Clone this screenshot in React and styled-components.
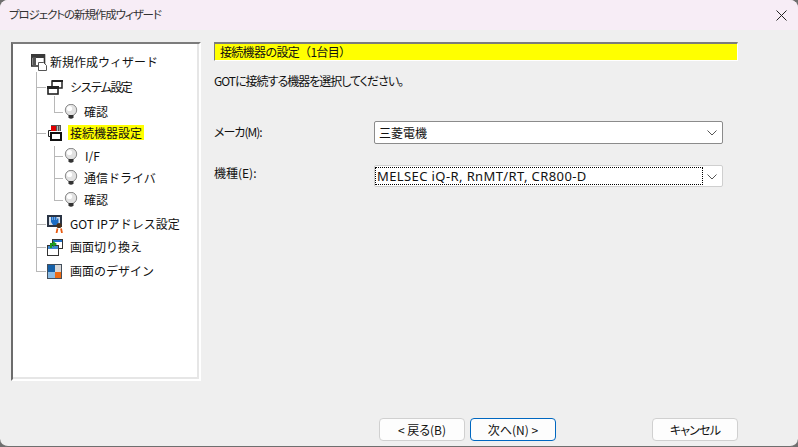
import styled, { createGlobalStyle } from "styled-components";

const GlobalStyle = createGlobalStyle`
  html, body {
    margin: 0;
    padding: 0;
    background: #6f6f6f;
  }
  * {
    box-sizing: border-box;
  }
`;

const treeItems = [
  { id: "root", label: "新規作成ウィザード", level: 0, height: 25, icon: "wizard", gap: 3 },
  { id: "system", label: "システム設定", level: 1, height: 25, icon: "system", gap: 7, tracking: -1.8 },
  { id: "confirm1", label: "確認", level: 2, height: 21, icon: "bulb", gap: 6 },
  { id: "device", label: "接続機器設定", level: 1, height: 23, icon: "device", gap: 7, selected: true },
  { id: "if", label: "I/F", level: 2, height: 22, icon: "bulb", gap: 7 },
  { id: "driver", label: "通信ドライバ", level: 2, height: 22, icon: "bulb", gap: 6 },
  { id: "confirm2", label: "確認", level: 2, height: 24, icon: "bulb", gap: 6 },
  { id: "ip", label: "GOT IPアドレス設定", level: 1, height: 23, icon: "got", gap: 6 },
  { id: "switch", label: "画面切り換え", level: 1, height: 24, icon: "switch", gap: 7 },
  { id: "design", label: "画面のデザイン", level: 1, height: 24, icon: "design", gap: 8 },
];

function TreeIcon({ name }) {
  if (name === "wizard") {
    return (
      <svg width="16" height="17" viewBox="0 0 16 17">
        <rect x="0.5" y="1" width="13" height="11" fill="#fff" stroke="#333" strokeWidth="1.6" />
        <rect x="0" y="0" width="14" height="4" fill="#3a3a3a" />
        <rect x="1.5" y="3" width="3.5" height="8" fill="#555" />
        <path d="M7.5 8.5h5l3 3v5h-8z" fill="#fff" stroke="#555" />
      </svg>
    );
  }
  if (name === "system") {
    return (
      <svg width="16" height="15" viewBox="0 0 16 15">
        <rect x="5" y="1" width="10" height="7" fill="#fff" stroke="#222" strokeWidth="1.5" />
        <rect x="5" y="0" width="11" height="2" fill="#222" />
        <rect x="1" y="7" width="10" height="7" fill="#fff" stroke="#222" strokeWidth="1.6" />
        <rect x="0" y="6" width="12" height="3" fill="#222" />
      </svg>
    );
  }
  if (name === "device") {
    return (
      <svg width="16" height="16" viewBox="0 0 16 16">
        <path d="M1.5 5.5h3M1.5 5.5v6h3" fill="none" stroke="#222" />
        <rect x="4" y="0" width="10" height="6" fill="#555" />
        <rect x="4" y="1" width="5" height="5" fill="#e00000" />
        <rect x="10" y="1" width="1" height="5" fill="#bbb" />
        <rect x="12" y="1" width="1" height="5" fill="#999" />
        <rect x="4" y="8" width="10" height="7" fill="#fff" stroke="#111" strokeWidth="2" />
      </svg>
    );
  }
  if (name === "got") {
    return (
      <svg width="17" height="18" viewBox="0 0 17 18">
        <rect x="0" y="0" width="15" height="12" fill="#2a3444" />
        <rect x="2" y="2" width="11" height="8" fill="#d5dfea" />
        <path d="M4 2h1.5v3H6V2h1.5v3H8V2h1.5v3H10V3.5h1.5V8l-2 2H6L4 7z" fill="#1c6cc4" />
        <circle cx="12" cy="10.5" r="2.6" fill="#4a3018" />
        <path d="M10.5 13.5l-1 4.5M14 13.5l1 4.5" stroke="#e85a10" strokeWidth="1.8" />
      </svg>
    );
  }
  if (name === "switch") {
    return (
      <svg width="16" height="17" viewBox="0 0 16 17">
        <rect x="5.5" y="0.5" width="10" height="9" fill="#fff" stroke="#333" />
        <rect x="6" y="1" width="9" height="2" fill="#1f70c8" />
        <rect x="0.5" y="6.5" width="11" height="10" fill="#fff" stroke="#333" />
        <rect x="1" y="7" width="10" height="3" fill="#3f88d0" />
        <path d="M3 9V4h3V2l4 3-4 3V6H5v3z" fill="#1f9a1f" />
      </svg>
    );
  }
  if (name === "design") {
    return (
      <svg width="15" height="15" viewBox="0 0 15 15">
        <rect x="0" y="0" width="15" height="15" fill="#444f5c" />
        <rect x="1" y="1" width="7" height="7" fill="#1560a8" />
        <rect x="8" y="1" width="6" height="7" fill="#d8d8d8" />
        <rect x="1" y="8" width="7" height="6" fill="#8cbce4" />
        <rect x="8" y="8" width="6" height="6" fill="#ee6a12" />
      </svg>
    );
  }
  return (
    <svg width="14" height="16" viewBox="0 0 14 16">
      <circle cx="7" cy="6" r="5.7" fill="#e2e2e2" stroke="#8a8a8a" />
      <circle cx="5.5" cy="4.5" r="2.6" fill="#fff" />
      <rect x="4.5" y="11" width="5" height="3" fill="#333" />
      <rect x="5.5" y="14" width="3" height="1" fill="#777" />
    </svg>
  );
}

function ComboBox({ value, focused }) {
  return (
    <Combo $focused={focused}>
      <ComboValue $focused={focused}>{value}</ComboValue>
      <ComboArrow>
        <svg width="10" height="6" viewBox="0 0 10 6">
          <path d="M0.5 0.5L5 5L9.5 0.5" fill="none" stroke="#555" />
        </svg>
      </ComboArrow>
    </Combo>
  );
}

function App() {
  return (
    <>
      <GlobalStyle />
      <Dialog>
        <TitleBar>
          <Title>プロジェクトの新規作成ウィザード</Title>
          <CloseIcon>
            <svg width="11" height="11" viewBox="0 0 11 11">
              <path d="M0.5 0.5L10.5 10.5M10.5 0.5L0.5 10.5" stroke="#222" strokeWidth="1" />
            </svg>
          </CloseIcon>
        </TitleBar>
        <Body>
          <TreePanel>
            <Tree>
              <TrunkLine />
              <BranchLine $top={52} $height={17} />
              <BranchLine $top={102} $height={54} />
              {treeItems.map((item) => (
                <TreeRow key={item.id} $level={item.level} $height={item.height}>
                  <IconSlot $gap={item.gap}>
                    <TreeIcon name={item.icon} />
                  </IconSlot>
                  <TreeLabel $selected={item.selected} $tracking={item.tracking}>
                    {item.label}
                  </TreeLabel>
                </TreeRow>
              ))}
            </Tree>
          </TreePanel>
          <Content>
            <Heading>接続機器の設定（1台目）</Heading>
            <Description>GOTに接続する機器を選択してください。</Description>
            <FormRow>
              <FieldLabel>メーカ(M):</FieldLabel>
              <ComboBox value="三菱電機" />
            </FormRow>
            <FormRow $second>
              <FieldLabel $second>機種(E):</FieldLabel>
              <ComboBox value="MELSEC iQ-R, RnMT/RT, CR800-D" focused />
            </FormRow>
          </Content>
        </Body>
        <Footer>
          <NavGroup>
            <Button>&lt; 戻る(B)</Button>
            <Button $primary>次へ(N) &gt;</Button>
          </NavGroup>
          <Button $tight>キャンセル</Button>
        </Footer>
      </Dialog>
    </>
  );
}

const Dialog = styled.div`
  width: 798px;
  height: 447px;
  display: flex;
  flex-direction: column;
  overflow: hidden;
  background: #efefef;
  border-radius: 8px;
  border-bottom: 1px solid #6f6f6f;
  font-family: "Noto Sans CJK JP", "Noto Sans", sans-serif;
  font-size: 12px;
  color: #111;
`;

const TitleBar = styled.div`
  height: 30px;
  flex: none;
  display: flex;
  align-items: center;
  justify-content: space-between;
  padding: 0 11px 2px 9px;
  background: #f7edf6;
`;

const Title = styled.div`
  font-size: 11.5px;
  color: #333;
  font-feature-settings: "palt";
  letter-spacing: -1.1px;
`;

const CloseIcon = styled.div`
  display: flex;
  margin-top: 2px;
`;

const Body = styled.div`
  flex: 1;
  display: flex;
  padding: 12px 60px 0 11px;
  gap: 13px;
  min-height: 0;
`;

const TreePanel = styled.div`
  width: 190px;
  height: 339px;
  flex: none;
  background: #fff;
  border-top: 2px solid #7c7c7c;
  border-left: 2px solid #6c6c6c;
  border-right: 2px solid #fff;
  border-bottom: 2px solid #fff;
  box-shadow: inset -2px -2px 0 #e6e6e6;
`;

const Tree = styled.div`
  position: relative;
  padding: 8px 0 0 18px;
`;

const TreeRow = styled.div`
  position: relative;
  display: flex;
  align-items: flex-start;
  height: ${(p) => p.$height}px;
  padding-left: ${(p) => (p.$level === 0 ? 0 : p.$level === 1 ? 16 : 33)}px;

  &::before {
    content: "";
    display: ${(p) => (p.$level === 0 ? "none" : "block")};
    position: absolute;
    top: 10px;
    left: ${(p) => (p.$level === 1 ? 5 : 23)}px;
    width: ${(p) => (p.$level === 1 ? 10 : 9)}px;
    border-top: 1px solid #b8b8b8;
  }
`;

const IconSlot = styled.span`
  display: flex;
  align-items: center;
  justify-content: center;
  height: 20px;
  flex: none;
  margin-right: ${(p) => p.$gap}px;
`;

const TreeLabel = styled.span`
  display: inline-block;
  padding: 0 2px;
  margin: 2px 0 0 -2px;
  line-height: 15px;
  background: ${(p) => (p.$selected ? "#ffff00" : "transparent")};
  white-space: nowrap;
  letter-spacing: ${(p) => p.$tracking || 0}px;
`;

const TrunkLine = styled.div`
  position: absolute;
  left: 23px;
  top: 28px;
  height: 200px;
  border-left: 1px solid #b8b8b8;
`;

const BranchLine = styled.div`
  position: absolute;
  left: 41px;
  top: ${(p) => p.$top}px;
  height: ${(p) => p.$height}px;
  border-left: 1px solid #b8b8b8;
`;

const Content = styled.div`
  flex: 1;
  display: flex;
  flex-direction: column;
  min-width: 0;
`;

const Heading = styled.div`
  height: 19px;
  width: 524px;
  padding-left: 5px;
  line-height: 16px;
  letter-spacing: -0.7px;
  background: #ffff00;
  border-top: 2px solid #7c7c7c;
  border-left: 1px solid #7c7c7c;
  border-right: 1px solid #fff;
  border-bottom: 1px solid #fff;
`;

const Description = styled.div`
  margin-top: 12px;
  line-height: 16px;
  height: 16px;
  font-feature-settings: "palt";
  letter-spacing: -1px;
`;

const FormRow = styled.div`
  display: flex;
  align-items: flex-start;
  margin-top: ${(p) => (p.$second ? 21 : 32)}px;
`;

const FieldLabel = styled.div`
  width: 160px;
  flex: none;
  padding-top: ${(p) => (p.$second ? 0 : 3)}px;
  line-height: 16px;
  font-feature-settings: "palt";
  letter-spacing: ${(p) => (p.$second ? 0 : -1)}px;
`;

const Combo = styled.div`
  width: 349px;
  height: ${(p) => (p.$focused ? 22 : 23)}px;
  display: flex;
  align-items: center;
  padding: 0 0 0 ${(p) => (p.$focused ? 1 : 3)}px;
  background: #fff;
  border: 1px solid ${(p) => (p.$focused ? "#cfcfcf" : "#8b8b8b")};
  border-radius: 2px;
`;

const ComboValue = styled.div`
  flex: 1;
  display: flex;
  align-items: center;
  height: 16px;
  padding-left: 1px;
  outline: ${(p) => (p.$focused ? "1px dotted #000" : "none")};
  white-space: nowrap;
  ${(p) => p.$focused && `font-family: "Noto Sans", sans-serif; font-size: 13px; letter-spacing: 0.4px;`}
`;

const ComboArrow = styled.div`
  width: 20px;
  flex: none;
  display: flex;
  justify-content: center;
  padding-top: 1px;
`;

const Footer = styled.div`
  flex: none;
  height: 28px;
  display: flex;
  justify-content: flex-end;
  gap: 96px;
  padding: 0 60px 5px 0;
`;

const NavGroup = styled.div`
  display: flex;
  gap: 5px;
`;

const Button = styled.button`
  width: 86px;
  height: 23px;
  padding: 0;
  font: inherit;
  line-height: 20px;
  color: #111;
  background: #fdfdfd;
  border: 1px solid ${(p) => (p.$primary ? "#0067c0" : "#d0d0d0")};
  border-radius: 4px;
  font-feature-settings: "palt";
  letter-spacing: ${(p) => (p.$tight ? -0.8 : 0)}px;
`;

export default App;
